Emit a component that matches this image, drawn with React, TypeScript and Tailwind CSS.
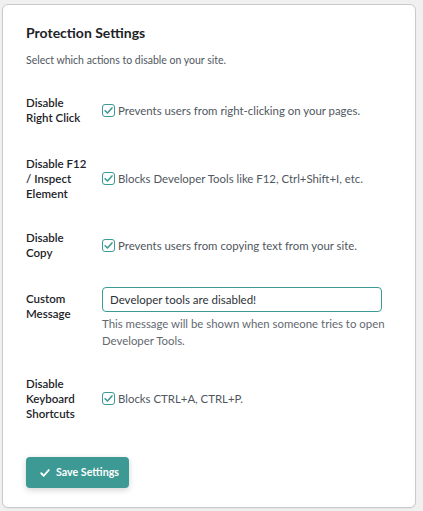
import React from "react";

const font = { fontFamily: 'Lato, "Noto Sans", sans-serif' };

function Tick() {
  return (
    <span className="inline-flex h-[13px] w-[13px] shrink-0 items-center justify-center rounded-[3px] border border-[#3b9a94] bg-white">
      <svg viewBox="0 0 12 12" className="h-[11px] w-[11px]" fill="none">
        <path d="M2.3 6.2 L4.9 8.8 L9.8 3.2" stroke="#3b9a94" strokeWidth="1.7" strokeLinecap="round" strokeLinejoin="round" />
      </svg>
    </span>
  );
}

function CheckRow({ label, text }: { label: string[]; text: string }) {
  return (
    <div className="flex items-center">
      <div className="w-[76px] shrink-0 text-[11.5px] font-semibold leading-[15px] text-[#1d2327]">
        {label.map((l) => (
          <div key={l}>{l}</div>
        ))}
      </div>
      <label className="flex items-center gap-[3px] whitespace-nowrap text-[11.4px] leading-[15px] text-[#50575e]">
        <Tick />
        <span>{text}</span>
      </label>
    </div>
  );
}

export default function App() {
  return (
    <div style={font} className="min-h-[511px] w-[423px] bg-[#f0f0f1] pl-[2px] pt-[4px]">
      <div className="flex h-[504px] w-[414px] flex-col rounded-[6px] border border-[#c9cacc] bg-white px-[23px] pt-[18px] shadow-[0_1px_1px_rgba(0,0,0,0.04)]">
        <h2 className="text-[14px] font-bold leading-[20px] text-[#1d2327]">Protection Settings</h2>
        <p className="mt-[10px] text-[10.5px] leading-[14px] text-[#50575e]">Select which actions to disable on your site.</p>

        <div className="mt-[28px]">
          <CheckRow label={["Disable", "Right Click"]} text="Prevents users from right-clicking on your pages." />
        </div>
        <div className="mt-[31px]">
          <CheckRow label={["Disable F12", "/ Inspect", "Element"]} text="Blocks Developer Tools like F12, Ctrl+Shift+I, etc." />
        </div>
        <div className="mt-[29px]">
          <CheckRow label={["Disable", "Copy"]} text="Prevents users from copying text from your site." />
        </div>

        <div className="mt-[27px] flex items-start">
          <div className="w-[76px] shrink-0 pt-[4px] text-[11.5px] font-semibold leading-[15px] text-[#1d2327]">
            <div>Custom</div>
            <div>Message</div>
          </div>
          <div className="flex flex-col">
            <input
              readOnly
              value="Developer tools are disabled!"
              className="h-[25px] w-[280px] rounded-[4px] border border-[#3b9a94] bg-white px-[7px] text-[11.5px] text-[#2c3338] outline-none"
              style={font}
            />
            <p className="mt-[3px] w-[286px] text-[11.4px] leading-[17px] text-[#646970]">
              This message will be shown when someone tries to open Developer Tools.
            </p>
          </div>
        </div>

        <div className="mt-[27px]">
          <CheckRow label={["Disable", "Keyboard", "Shortcuts"]} text="Blocks CTRL+A, CTRL+P." />
        </div>

        <div className="mt-[36px]">
          <button
            className="flex h-[31px] w-[103px] items-center gap-[6px] whitespace-nowrap rounded-[4px] bg-[#3d9994] pl-[14px] text-[10.7px] font-bold text-white shadow-[0_2px_6px_rgba(0,0,0,0.18)]"
            style={font}
          >
            <svg viewBox="0 0 12 12" className="h-[10px] w-[10px]" fill="none">
              <path d="M1.5 6.3 L4.5 9.3 L10.5 2.5" stroke="white" strokeWidth="2.2" strokeLinecap="round" strokeLinejoin="round" />
            </svg>
            Save Settings
          </button>
        </div>
      </div>
    </div>
  );
}
